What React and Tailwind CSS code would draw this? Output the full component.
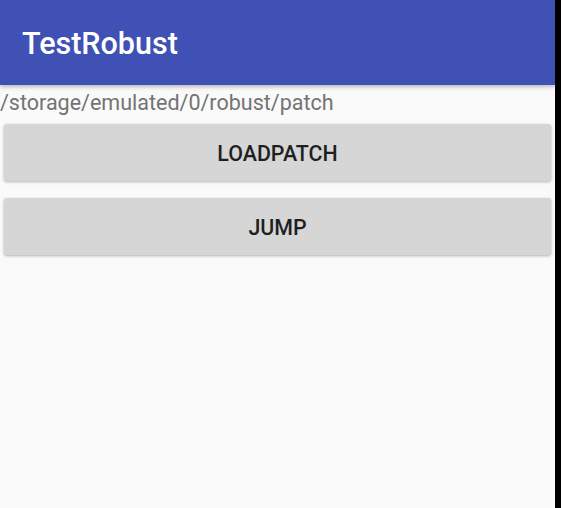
export default function App() {
  return (
    <div className="flex h-[508px] w-[561px] bg-black" style={{ fontFamily: 'Roboto, "Noto Sans", sans-serif' }}>
      <div className="flex w-[555px] flex-col bg-[#fafafa]">
        <div className="relative z-10 flex h-[85px] items-center bg-[#3f51b5] pl-[22px] pt-[4px] shadow-[0_2px_4px_rgba(0,0,0,0.25)]">
          <span className="text-[30.5px] font-medium leading-none text-white">TestRobust</span>
        </div>
        <div className="pt-[5px] text-[21.5px] leading-[26px] text-[#737373]">/storage/emulated/0/robust/patch</div>
        <div className="flex flex-col gap-[17px] px-[4px] pt-[8px]">
          <button className="flex h-[57px] items-center justify-center rounded-[3px] bg-[#d6d6d6] pt-[3px] text-[21.4px] font-medium text-[#1f1f1f] shadow-[0_1px_3px_rgba(0,0,0,0.3)]">
            LOADPATCH
          </button>
          <button className="flex h-[57px] items-center justify-center rounded-[3px] bg-[#d6d6d6] pt-[3px] text-[21.4px] font-medium text-[#1f1f1f] shadow-[0_1px_3px_rgba(0,0,0,0.3)]">
            JUMP
          </button>
        </div>
      </div>
    </div>
  );
}
